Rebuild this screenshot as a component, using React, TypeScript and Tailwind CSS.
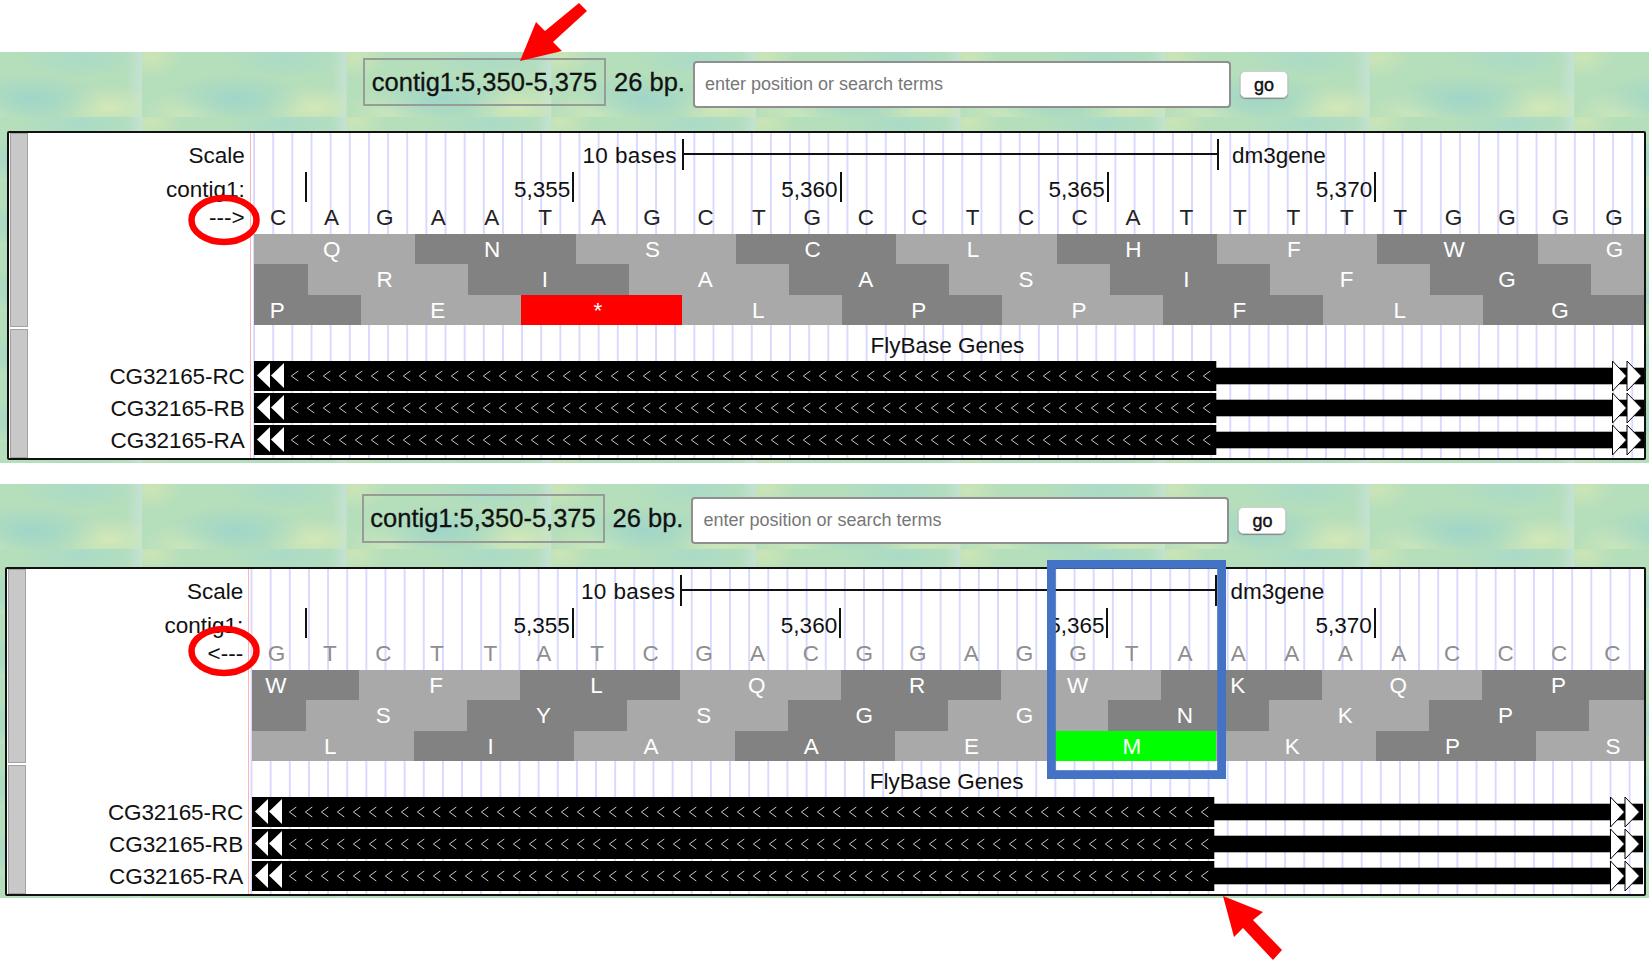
const BASE_W = 53.45;
const CODON_W = 160.35;
const TICK_W = 267.3;

type Tone = "light" | "dark" | "red" | "green";
type Codon = { aa: string; tone: Tone };

const toneClass: Record<Tone, string> = {
  light: "bg-[#a9a9a9]",
  dark: "bg-[#828282]",
  red: "bg-[#ff0000]",
  green: "bg-[#00ff00]",
};

// builds a row of alternating grey codons, first one dark or light
function codons(letters: string, first: Tone, special: Record<number, Tone> = {}): Codon[] {
  return letters.split("").map((ch, i) => ({
    aa: ch === "_" ? "" : ch,
    tone: special[i] ?? (i % 2 === 0 ? first : first === "light" ? "dark" : "light"),
  }));
}

const forward = {
  direction: "--->",
  bases: "CAGAATAGCTGCCTCCATTTTTGGGG",
  firstTick: 56.3,
  shifts: [1.35, -106.05, -53.05],
  frames: [
    codons("QNSCLHFWG", "light"),
    codons("_RIAASIFG_", "dark"),
    codons("PE*LPPFLG", "dark", { 2: "red" }),
  ],
};

const reverse = {
  direction: "<---",
  bases: "GTCTTATCGACGGAGGTAAAAACCCC",
  firstTick: 57.4,
  shifts: [-53.05, -106.05, 1.35],
  frames: [
    codons("WFLQRWKQP", "dark"),
    codons("_SYSGGNKP_", "dark"),
    codons("LIAAEMKPS", "light", { 5: "green" }),
  ],
};

const genes = ["CG32165-RC", "CG32165-RB", "CG32165-RA"];
const positions = ["5,355", "5,360", "5,365", "5,370"];
const chevrons = Array.from({ length: 58 }, (_, i) => 37.3 + i * 16);

const textureClass =
  "bg-[radial-gradient(ellipse_34%_40%_at_46%_72%,#a0d6c8_0%,transparent_100%),radial-gradient(ellipse_30%_30%_at_70%_10%,#aadbc8_0%,transparent_100%),radial-gradient(ellipse_26%_36%_at_84%_86%,#d3e8b8_0%,transparent_100%),radial-gradient(ellipse_16%_34%_at_4%_8%,#cbe5b6_0%,transparent_100%),radial-gradient(ellipse_24%_36%_at_22%_94%,#cae6ba_0%,transparent_100%),linear-gradient(90deg,transparent_92%,#c4e2d4_100%),linear-gradient(#b5debb,#b5debb)] [background-size:204.6px_65px]";

function GeneTrack() {
  return (
    <svg width="1391" height="30" className="block overflow-visible">
      <rect x="0" y="0" width="962.3" height="30" fill="#000" />
      <rect x="962" y="6.7" width="429" height="16.6" fill="#000" />
      <polygon points="3,14.5 16,2 16,27" fill="#fff" />
      <polygon points="17,14.5 30,2 30,27" fill="#fff" />
      {chevrons.map((x) => (
        <polyline
          key={x}
          points={`${x + 7},10 ${x},15 ${x + 7},20`}
          fill="none"
          stroke="#c8c8c8"
          strokeWidth="1"
        />
      ))}
      <polygon points="1358.5,0 1372.5,15 1358.5,30" fill="#fff" stroke="#000" strokeWidth="1" />
      <polygon points="1373,0 1387.5,15 1373,30" fill="#fff" stroke="#000" strokeWidth="1" />
    </svg>
  );
}

function SearchBar({ className, boxClass }: { className: string; boxClass: string }) {
  return (
    <div className={`flex items-start ${className}`}>
      <div
        className={`flex w-[243px] items-center justify-center border-2 border-[#979c98] text-[25.5px] text-[#111] [-webkit-text-stroke:0.3px_#111] ${boxClass}`}
      >
        contig1:5,350-5,375
      </div>
      <div className="ml-[8px] mt-[6px] text-[25.5px] leading-[36px] text-[#111] [-webkit-text-stroke:0.3px_#111]">
        26 bp.
      </div>
      <input
        readOnly
        placeholder="enter position or search terms"
        className="ml-[8px] mt-[3px] h-[47px] w-[538px] rounded-[4px] border-2 border-[#8f8f8f] bg-white px-[10px] text-[18px] outline-none placeholder:text-[#777]"
      />
      <button className="ml-[9px] mt-[13px] h-[27px] w-[48px] rounded-[5px] border border-[#d0d0d0] bg-white text-[18px] leading-none text-[#111] shadow-[0_1px_1px_#888] [-webkit-text-stroke:0.4px_#111]">
        go
      </button>
    </div>
  );
}

function Panel({
  data,
  className,
  gridClass,
  baseClass,
}: {
  data: typeof forward;
  className: string;
  gridClass: string;
  baseClass: string;
}) {
  return (
    <div className={`flex h-[329px] rounded-[2px] border-2 border-[#111] bg-white text-[22.5px] text-[#111] ${className}`}>
      <div className="ml-[1px] flex w-[18px] flex-col">
        <div className="h-[194px] border border-[#a2a2a2] bg-[#c8c8c8]" />
        <div className="mt-[2px] flex-1 border border-[#a2a2a2] bg-[#c8c8c8]" />
      </div>

      <div className="flex w-[223.2px] flex-col items-end border-r border-[#ffb4b4] pr-[5px]">
        <div className="h-[39px] pt-[10px] leading-[26px]">Scale</div>
        <div className="h-[32px] pt-[5px] leading-[26px]">contig1:</div>
        <div className="h-[30px] leading-[28px]">{data.direction}</div>
        <div className="h-[127.5px]" />
        {genes.map((g) => (
          <div key={g} className="h-[32px] leading-[30px] tracking-[-0.1px]">
            {g}
          </div>
        ))}
      </div>

      <div className={`min-w-0 flex-1 overflow-hidden ${gridClass}`}>
        <div className="flex h-[39px] items-start">
          <div className="flex w-[431.3px] justify-end pr-[5px] pt-[10px] leading-[26px] tracking-[0.4px]">10 bases</div>
          <div className="mt-[6px] h-[31px] w-[2px] bg-[#111]" />
          <div className="mt-[20px] h-[2px] w-[533px] bg-[#111]" />
          <div className="mt-[6px] h-[31px] w-[2px] bg-[#111]" />
          <div className="ml-[13px] pt-[10px] leading-[26px]">dm3gene</div>
        </div>

        <div className="flex h-[32px] items-start">
          <div className="h-[30px] shrink-0 border-r-2 border-[#111]" style={{ width: data.firstTick }} />
          {positions.map((p) => (
            <div
              key={p}
              className="h-[30px] shrink-0 border-r-2 border-[#111] pr-[2px] pt-[5px] text-right leading-[26px]"
              style={{ width: TICK_W }}
            >
              {p}
            </div>
          ))}
        </div>

        <div className={`flex h-[30px] pl-[0.6px] leading-[28px] ${baseClass}`}>
          {data.bases.split("").map((b, i) => (
            <div key={i} className="shrink-0 text-center" style={{ width: BASE_W }}>
              {b}
            </div>
          ))}
        </div>

        <div className="ml-[3px] flex flex-col">
          {data.frames.map((frame, r) => (
            <div key={r} className={`flex h-[30.33px] overflow-hidden ${toneClass[frame[0].tone]}`}>
              <div className="flex" style={{ marginLeft: data.shifts[r] }}>
                {frame.map((c, i) => (
                  <div
                    key={i}
                    className={`shrink-0 pr-[7px] text-center leading-[31px] text-white ${toneClass[c.tone]}`}
                    style={{ width: CODON_W }}
                  >
                    {c.aa}
                  </div>
                ))}
              </div>
            </div>
          ))}
        </div>

        <div className="h-[36.5px] pt-[8px] text-center leading-[26px]">FlyBase Genes</div>

        <div className="ml-[3px] flex flex-col">
          {genes.map((g) => (
            <div key={g} className="h-[32px]">
              <GeneTrack />
            </div>
          ))}
        </div>
      </div>
    </div>
  );
}

function Annotations() {
  return (
    <svg width="1649" height="960" className="pointer-events-none absolute left-0 top-0">
      <polygon points="520,61 536,22 545,31 579,3 587,11 553,42 562,51" fill="#ff0000" />
      <polygon points="1223,896 1263,912 1253,920 1282,950 1273,960 1243,928 1234,937" fill="#ff0000" />
      <ellipse cx="224" cy="220" rx="32.5" ry="22" fill="none" stroke="#ff0000" strokeWidth="6.5" />
      <ellipse cx="224" cy="651" rx="32.5" ry="22" fill="none" stroke="#ff0000" strokeWidth="6.5" />
      <rect x="1051.4" y="564.4" width="170.2" height="210.2" fill="none" stroke="#4472c4" strokeWidth="8.8" />
    </svg>
  );
}

export default function App() {
  return (
    <div className="relative h-[960px] w-[1649px] overflow-hidden bg-white font-['Liberation_Sans',Arial,sans-serif]">
      <div className="h-[52px]" />

      <div className={`h-[411px] pt-[6px] [background-position:142px_0] ${textureClass}`}>
        <SearchBar className="mb-[23px] ml-[363px]" boxClass="h-[48px]" />
        <Panel
          data={forward}
          className="ml-[6.5px] mr-[3px]"
          gridClass="bg-[linear-gradient(90deg,#d9d9ff_1.5px,transparent_1.5px)] [background-size:19.15px_100%] [background-position:2.15px_0]"
          baseClass="text-[#222]"
        />
      </div>

      <div className="h-[21px]" />

      <div className={`h-[414px] pt-[10px] [background-position:142px_0] ${textureClass}`}>
        <SearchBar className="mb-[23px] ml-[361.5px]" boxClass="h-[49px]" />
        <Panel
          data={reverse}
          className="ml-[5px] mr-[3px]"
          gridClass="bg-[linear-gradient(90deg,#d9d9ff_1.5px,transparent_1.5px)] [background-size:19.15px_100%] [background-position:1.55px_0]"
          baseClass="text-[#8e8e8e]"
        />
      </div>

      <Annotations />
    </div>
  );
}
